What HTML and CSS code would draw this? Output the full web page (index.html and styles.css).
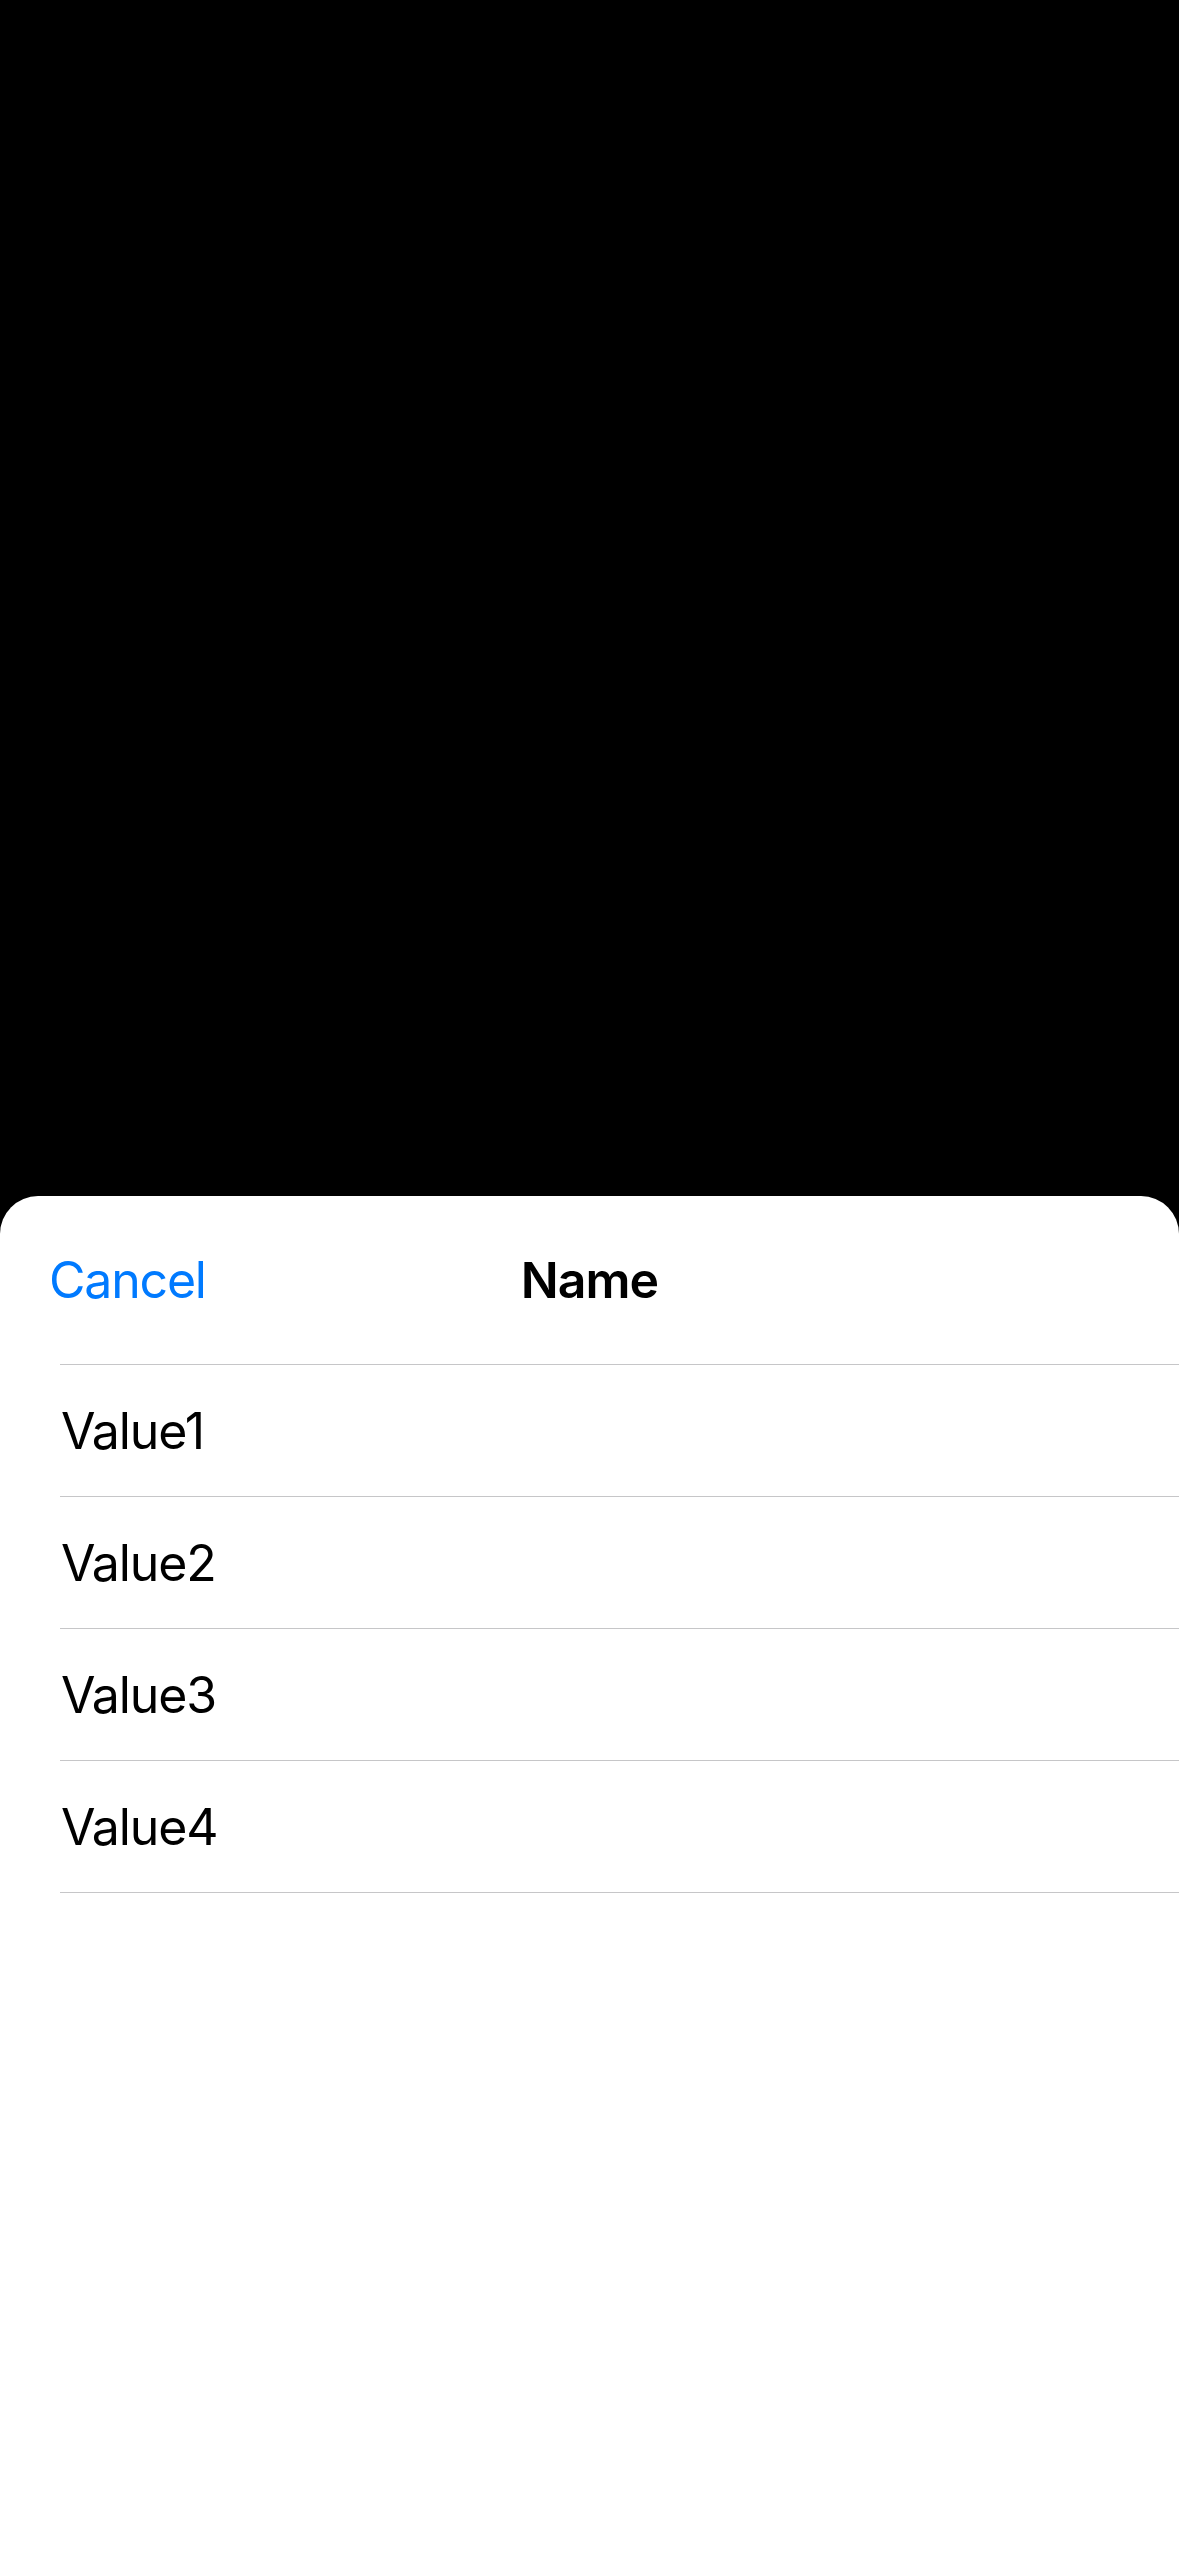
FILE: index.html
```html
<!DOCTYPE html>
<html lang="en">
<head>
<meta charset="utf-8">
<title>Picker</title>
<link rel="stylesheet" href="styles.css">
</head>
<body>
<div class="screen">
  <div class="backdrop"></div>
  <div class="sheet">
    <div class="header">
      <span class="cancel">Cancel</span>
      <span class="title">Name</span>
      <span class="spacer"></span>
    </div>
    <ul class="list">
      <li class="row">Value1</li>
      <li class="row">Value2</li>
      <li class="row">Value3</li>
      <li class="row">Value4</li>
    </ul>
  </div>
</div>
</body>
</html>
```
FILE: styles.css
```css
html, body {
  margin: 0;
  padding: 0;
  background: #000;
}
.screen {
  width: 1179px;
  height: 2556px;
  display: flex;
  flex-direction: column;
  font-family: Inter, "Noto Sans", sans-serif;
  overflow: hidden;
}
.backdrop {
  height: 1196px;
  flex: none;
  background: #000;
}
.sheet {
  flex: 1;
  background: #fff;
  border-radius: 38px 38px 0 0;
}
.header {
  height: 168px;
  display: grid;
  grid-template-columns: 1fr auto 1fr;
  align-items: center;
  padding: 0 49px;
}
.cancel {
  color: #007aff;
  font-size: 50px;
  letter-spacing: -1.2px;
  justify-self: start;
}
.title {
  color: #000;
  font-size: 50px;
  font-weight: 600;
  letter-spacing: -1px;
}
.list {
  list-style: none;
  margin: 0 0 0 60px;
  padding: 0;
  border-top: 1px solid #c6c6c8;
}
.row {
  height: 131px;
  display: flex;
  align-items: center;
  padding-left: 1px;
  font-size: 50px;
  color: #000;
  letter-spacing: -1.1px;
  border-bottom: 1px solid #c6c6c8;
}
```
